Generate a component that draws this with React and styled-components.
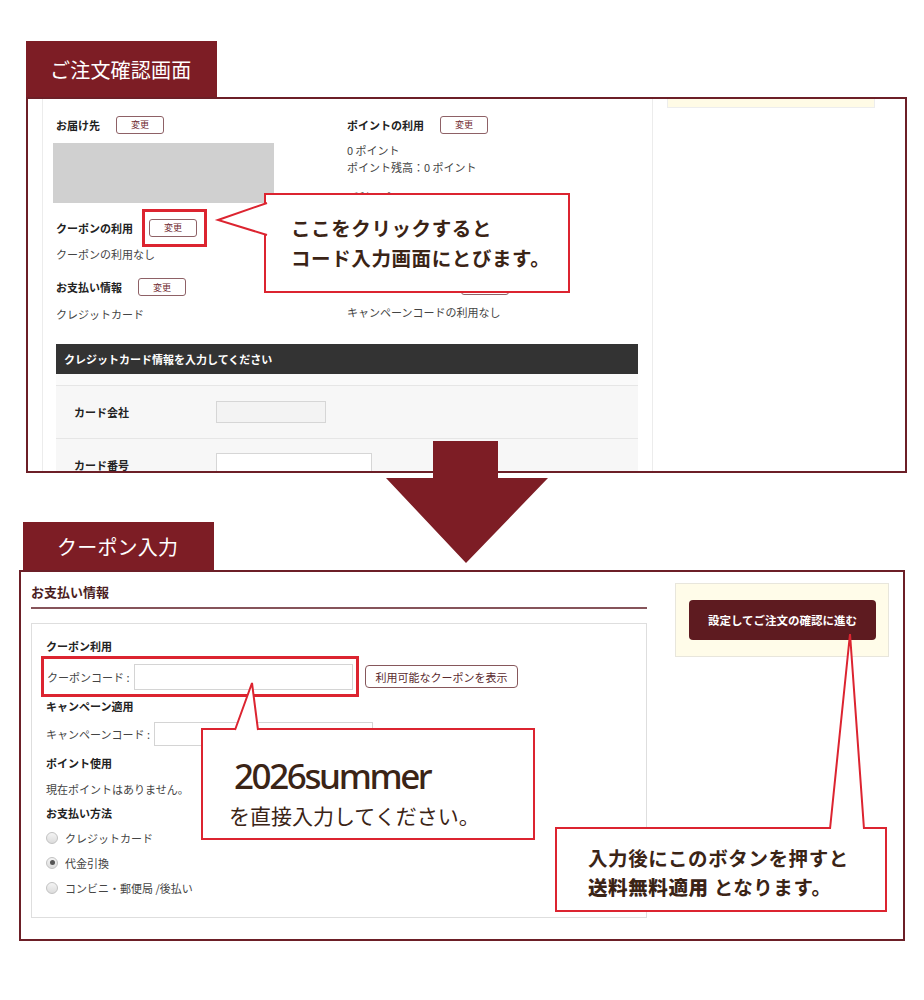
import styled, { createGlobalStyle } from 'styled-components';

const GlobalStyle = createGlobalStyle`
  body {
    margin: 0;
    background: #fff;
    font-family: "Noto Sans CJK JP", "Noto Sans", sans-serif;
    color: #333;
  }
`;

const MAROON = '#7d1d25';
const FRAME = '#6c1f27';
const ALERT = '#dc2430';
const INK = '#3b2416';

const App = () => {
  return (
    <>
      <GlobalStyle />
      <Page>
        {/* order confirmation screen */}
        <Section $left={26}>
          <Tab $h={56} $pl={24}>ご注文確認画面</Tab>
          <Panel $w={881} $h={376}>
            <TopLayout>
              <MainCol>
                <InfoGrid>
                  <Column>
                    <LabelRow>
                      <Label>お届け先</Label>
                      <ChangeButton>変更</ChangeButton>
                    </LabelRow>
                    <AddressBlock />
                    <LabelRow $mt={15}>
                      <Label>クーポンの利用</Label>
                      <Marked>
                        <ChangeButton>変更</ChangeButton>
                        <Ring />
                      </Marked>
                    </LabelRow>
                    <InfoText $mt={9}>クーポンの利用なし</InfoText>
                    <LabelRow $mt={15}>
                      <Label>お支払い情報</Label>
                      <ChangeButton>変更</ChangeButton>
                    </LabelRow>
                    <InfoText $mt={9}>クレジットカード</InfoText>
                  </Column>
                  <Column>
                    <LabelRow>
                      <Label>ポイントの利用</Label>
                      <ChangeButton>変更</ChangeButton>
                    </LabelRow>
                    <InfoText $mt={8}>0 ポイント</InfoText>
                    <InfoText>ポイント残高：0 ポイント</InfoText>
                    <InfoText $mt={14}>ご利用ポイント：0</InfoText>
                    <LabelRow $mt={71}>
                      <Label>キャンペーンの利用</Label>
                      <ChangeButton>変更</ChangeButton>
                    </LabelRow>
                    <InfoText $mt={8}>キャンペーンコードの利用なし</InfoText>
                  </Column>
                </InfoGrid>

                <CardTable>
                  <CardHead>クレジットカード情報を入力してください</CardHead>
                  <CardStrip />
                  <CardRow>
                    <CardLabel>カード会社</CardLabel>
                    <CardInput $w={110} $h={22} $bg="#f3f3f3" />
                  </CardRow>
                  <CardRow>
                    <CardLabel>カード番号</CardLabel>
                    <CardInput $w={156} $h={24} $bg="#fff" />
                  </CardRow>
                </CardTable>
              </MainCol>
              <SideCol>
                <SideBoxTop />
              </SideCol>
            </TopLayout>
          </Panel>
        </Section>

        {/* coupon entry screen */}
        <Section $left={19} $mt={49}>
          <Tab $h={48} $pl={34} $ml={4}>クーポン入力</Tab>
          <Panel $w={886} $h={371}>
            <BottomLayout>
              <FormCol>
                <FormHeading>お支払い情報</FormHeading>
                <FormBox>
                  <FieldTitle>クーポン利用</FieldTitle>
                  <CouponRow>
                    <HighlightBox>
                      <FieldLabel>クーポンコード :</FieldLabel>
                      <TextInput $w={219} $h={26} />
                    </HighlightBox>
                    <OutlineButton>利用可能なクーポンを表示</OutlineButton>
                  </CouponRow>
                  <FieldTitle $mt={1}>キャンペーン適用</FieldTitle>
                  <FieldRow>
                    <FieldLabel>キャンペーンコード :</FieldLabel>
                    <TextInput $w={219} $h={24} />
                  </FieldRow>
                  <FieldTitle $mt={9}>ポイント使用</FieldTitle>
                  <FieldText $mt={10}>現在ポイントはありません。</FieldText>
                  <FieldTitle $mt={8}>お支払い方法</FieldTitle>
                  <RadioList>
                    {[
                      { label: 'クレジットカード', checked: false },
                      { label: '代金引換', checked: true },
                      { label: 'コンビニ・郵便局 /後払い', checked: false },
                    ].map((item) => (
                      <RadioItem key={item.label}>
                        <RadioDot $checked={item.checked} />
                        {item.label}
                      </RadioItem>
                    ))}
                  </RadioList>
                </FormBox>
              </FormCol>
              <ActionCol>
                <ActionBox>
                  <SubmitButton>設定してご注文の確認に進む</SubmitButton>
                </ActionBox>
              </ActionCol>
            </BottomLayout>
          </Panel>
        </Section>

        <DownArrow width="166" height="126" viewBox="0 0 166 126">
          <path d="M49 1 H114 V38 H164 L82 123 L2 38 H49 Z" fill={MAROON} />
        </DownArrow>

        <Callout $x={264} $y={193} $w={306} $h={100} $pt={18} $pl={25}>
          <Pointer
            width="54"
            height="50"
            viewBox="0 0 54 50"
            style={{ left: -50, top: 0 }}
          >
            <polygon points="2,25 51,8 54,8 54,40 51,40" fill="#fff" />
            <polyline points="51,8 2,25 51,40" fill="none" stroke={ALERT} strokeWidth="2" />
          </Pointer>
          <CalloutLine>ここをクリックすると</CalloutLine>
          <CalloutLine>コード入力画面にとびます。</CalloutLine>
        </Callout>

        <Callout $x={201} $y={728} $w={334} $h={112} $pt={26} $pl={26}>
          <Pointer
            width="60"
            height="54"
            viewBox="0 0 60 54"
            style={{ left: 0, top: -50 }}
          >
            <polygon points="32,50 49,3 55,50 55,54 32,54" fill="#fff" />
            <polyline points="32,50 49,3 55,50" fill="none" stroke={ALERT} strokeWidth="2" />
          </Pointer>
          <CodeText>2026summer</CodeText>
          <CodeNote>を直接入力してください。</CodeNote>
        </Callout>

        <Callout $x={555} $y={827} $w={332} $h={85} $pt={14} $pl={31}>
          <Pointer
            width="40"
            height="202"
            viewBox="0 0 40 202"
            style={{ left: 270, top: -198 }}
          >
            <polygon points="3,198 23,3 37,198 37,202 3,202" fill="#fff" />
            <polyline points="3,198 23,3 37,198" fill="none" stroke={ALERT} strokeWidth="2" />
          </Pointer>
          <CalloutLine $lh={29}>入力後にこのボタンを押すと</CalloutLine>
          <CalloutLine $lh={29}>
            <Strong>送料無料適用</Strong> となります。
          </CalloutLine>
        </Callout>
      </Page>
    </>
  );
};

export default App;

const Page = styled.div`
  position: relative;
  width: 924px;
  height: 1000px;
  padding-top: 41px;
  box-sizing: border-box;
  overflow: hidden;
`;

const Section = styled.section`
  margin-left: ${(p) => p.$left}px;
  margin-top: ${(p) => p.$mt || 0}px;
`;

const Tab = styled.div`
  width: 191px;
  height: ${(p) => p.$h}px;
  margin-left: ${(p) => p.$ml || 0}px;
  padding-left: ${(p) => p.$pl}px;
  box-sizing: border-box;
  display: flex;
  align-items: center;
  background: ${MAROON};
  color: #fff;
  font-size: 20px;
  letter-spacing: 0.2px;
`;

const Panel = styled.div`
  width: ${(p) => p.$w}px;
  height: ${(p) => p.$h}px;
  box-sizing: border-box;
  border: 2px solid ${FRAME};
  background: #fff;
  overflow: hidden;
`;

/* top panel */

const TopLayout = styled.div`
  display: flex;
  height: 100%;
  padding-left: 14px;
`;

const MainCol = styled.div`
  width: 611px;
  box-sizing: border-box;
  padding: 16px 14px 0 13px;
  border-left: 1px solid #ececec;
  border-right: 1px solid #ececec;
`;

const InfoGrid = styled.div`
  display: grid;
  grid-template-columns: 291px 1fr;
`;

const Column = styled.div`
  display: flex;
  flex-direction: column;
`;

const LabelRow = styled.div`
  display: flex;
  align-items: center;
  gap: 16px;
  height: 19px;
  margin-top: ${(p) => p.$mt || 0}px;
`;

const Label = styled.span`
  font-size: 11px;
  font-weight: 700;
  color: #222;
`;

const ChangeButton = styled.span`
  display: inline-flex;
  align-items: center;
  justify-content: center;
  width: 48px;
  height: 18px;
  box-sizing: border-box;
  border: 1px solid #8e6166;
  border-radius: 3px;
  background: #fff;
  font-size: 9px;
  color: #6e2a30;
`;

const Marked = styled.span`
  position: relative;
  display: inline-flex;
`;

const Ring = styled.span`
  position: absolute;
  left: -7px;
  top: -10px;
  width: 65px;
  height: 38px;
  box-sizing: border-box;
  border: 3px solid ${ALERT};
`;

const AddressBlock = styled.div`
  width: 221px;
  height: 60px;
  margin: 9px 0 0 -3px;
  background: #d0d0d0;
`;

const InfoText = styled.div`
  margin-top: ${(p) => p.$mt || 0}px;
  font-size: 11px;
  line-height: 16.5px;
  color: #444;
`;

const CardTable = styled.div`
  width: 582px;
  margin-top: 22px;
`;

const CardHead = styled.div`
  height: 30px;
  padding-left: 8px;
  display: flex;
  align-items: center;
  background: #333;
  color: #fff;
  font-size: 11px;
  font-weight: 700;
`;

const CardStrip = styled.div`
  height: 11px;
  background: #fafafa;
`;

const CardRow = styled.div`
  height: 52px;
  display: flex;
  align-items: center;
  background: #f7f7f7;
  border-top: 1px solid #e6e6e6;
`;

const CardLabel = styled.div`
  width: 160px;
  padding-left: 18px;
  box-sizing: border-box;
  font-size: 11px;
  font-weight: 700;
  color: #222;
`;

const CardInput = styled.div`
  width: ${(p) => p.$w}px;
  height: ${(p) => p.$h}px;
  box-sizing: border-box;
  background: ${(p) => p.$bg};
  border: 1px solid #d6d6d6;
`;

const SideCol = styled.div`
  padding: 0 14px;
`;

const SideBoxTop = styled.div`
  width: 208px;
  height: 9px;
  box-sizing: border-box;
  background: #fffbe6;
  border: 1px solid #ededed;
  border-top: none;
`;

/* bottom panel */

const BottomLayout = styled.div`
  display: flex;
  padding-left: 10px;
`;

const FormCol = styled.div`
  width: 616px;
`;

const FormHeading = styled.h2`
  margin: 0;
  padding: 11px 0 6px;
  border-bottom: 2px solid #86545a;
  font-size: 13px;
  line-height: 18px;
  font-weight: 700;
  color: #4b1d22;
`;

const FormBox = styled.div`
  margin-top: 14px;
  height: 295px;
  box-sizing: border-box;
  padding: 14px 14px 0;
  border: 1px solid #dedede;
`;

const FieldTitle = styled.div`
  margin-top: ${(p) => p.$mt || 0}px;
  font-size: 11px;
  line-height: 16px;
  font-weight: 700;
  color: #222;
`;

const FieldText = styled.div`
  margin-top: ${(p) => p.$mt || 0}px;
  font-size: 11px;
  line-height: 16px;
  color: #444;
`;

const CouponRow = styled.div`
  display: flex;
  align-items: center;
  gap: 6px;
  margin: 2px 0 0 -5px;
`;

const HighlightBox = styled.div`
  width: 318px;
  height: 41px;
  box-sizing: border-box;
  border: 3px solid ${ALERT};
  padding: 0 3px 0 3px;
  display: flex;
  align-items: center;
  justify-content: space-between;
`;

const FieldRow = styled.div`
  display: flex;
  align-items: center;
  gap: 4px;
  height: 24px;
  margin-top: 8px;
`;

const FieldLabel = styled.span`
  font-size: 11px;
  color: #444;
  white-space: nowrap;
`;

const TextInput = styled.div`
  width: ${(p) => p.$w}px;
  height: ${(p) => p.$h}px;
  box-sizing: border-box;
  border: 1px solid #d4d4d4;
  background: #fff;
`;

const OutlineButton = styled.span`
  display: inline-flex;
  align-items: center;
  justify-content: center;
  width: 153px;
  height: 23px;
  box-sizing: border-box;
  border: 1px solid #86575b;
  border-radius: 4px;
  font-size: 11px;
  color: #5a2a2e;
  background: #fff;
`;

const RadioList = styled.div`
  margin-top: 4px;
`;

const RadioItem = styled.div`
  display: flex;
  align-items: center;
  gap: 7px;
  height: 25px;
  font-size: 11px;
  color: #444;
`;

const RadioDot = styled.span`
  position: relative;
  width: 12px;
  height: 12px;
  box-sizing: border-box;
  border-radius: 50%;
  border: 1px solid #c2c2c2;
  background: linear-gradient(#f4f4f4, #dcdcdc);

  &::after {
    content: '';
    display: ${(p) => (p.$checked ? 'block' : 'none')};
    position: absolute;
    left: 2.5px;
    top: 2.5px;
    width: 5px;
    height: 5px;
    border-radius: 50%;
    background: #555;
  }
`;

const ActionCol = styled.div`
  margin-left: 28px;
  padding-top: 11px;
`;

const ActionBox = styled.div`
  width: 214px;
  height: 74px;
  box-sizing: border-box;
  padding: 16px 13px;
  background: #fffce9;
  border: 1px solid #e8e6dc;
`;

const SubmitButton = styled.div`
  width: 187px;
  height: 40px;
  display: flex;
  align-items: center;
  justify-content: center;
  border-radius: 4px;
  background: #5e1b20;
  color: #fff;
  font-size: 11.5px;
  font-weight: 700;
`;

/* overlays */

const DownArrow = styled.svg`
  position: absolute;
  left: 384px;
  top: 440px;
`;

const Callout = styled.div`
  position: absolute;
  left: ${(p) => p.$x}px;
  top: ${(p) => p.$y}px;
  width: ${(p) => p.$w}px;
  height: ${(p) => p.$h}px;
  box-sizing: border-box;
  padding: ${(p) => p.$pt}px 0 0 ${(p) => p.$pl}px;
  border: 2px solid ${ALERT};
  background: #fff;
  color: ${INK};
`;

const Pointer = styled.svg`
  position: absolute;
  overflow: visible;
`;

const CalloutLine = styled.div`
  font-size: 19.5px;
  line-height: ${(p) => p.$lh || 30}px;
  font-weight: 700;
  letter-spacing: 0.6px;
  white-space: nowrap;
`;

const Strong = styled.span`
  font-weight: 900;
`;

const CodeText = styled.div`
  margin-left: 5px;
  font-family: "Noto Sans", sans-serif;
  font-size: 35px;
  line-height: 40px;
  letter-spacing: -2.4px;
  font-weight: 500;
`;

const CodeNote = styled.div`
  margin-top: 4px;
  font-size: 21px;
  line-height: 30px;
`;
